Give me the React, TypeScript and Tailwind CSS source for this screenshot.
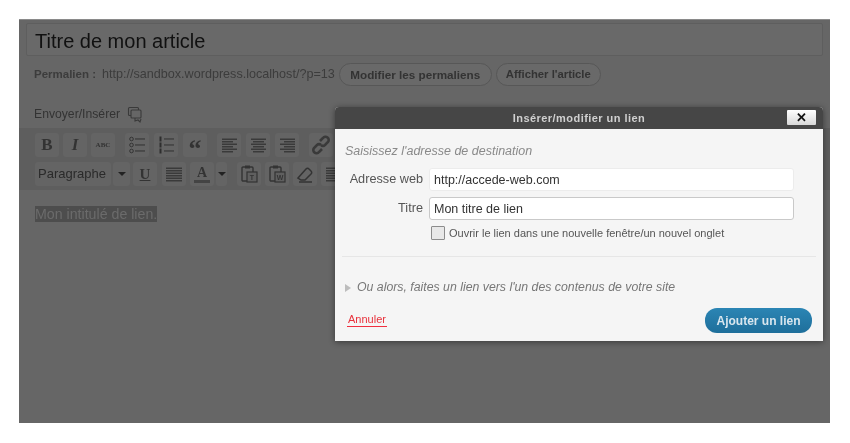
import type { ReactNode } from 'react'

const font = "font-['Liberation_Sans',Arial,sans-serif]"

function ToolButton({ children }: { children: ReactNode }) {
  return (
    <div className="flex h-[24px] w-[24px] items-center justify-center rounded-[3px] bg-[#646464]">
      {children}
    </div>
  )
}

function Lines({ kind }: { kind: 'left' | 'center' | 'right' | 'full' }) {
  const rows = [2.5, 5, 7.5, 10, 12.5, 15]
  const get = (i: number) => {
    const long = i % 2 === 0
    if (kind === 'full') return { x: 2, w: 16 }
    if (kind === 'left') return { x: 3, w: long ? 15 : 11 }
    if (kind === 'center') return { x: long ? 3 : 5, w: long ? 15 : 11 }
    return { x: long ? 3 : 7, w: long ? 15 : 11 }
  }
  return (
    <svg width="20" height="18" viewBox="0 0 20 18">
      {rows.map((y, i) => (
        <rect key={y} x={get(i).x} y={y} width={get(i).w} height="1.5" fill="#3a3a3a" />
      ))}
    </svg>
  )
}

function ListIcon({ numbered }: { numbered?: boolean }) {
  return (
    <svg width="20" height="18" viewBox="0 0 20 18">
      {[3, 9, 15].map(y => (
        <g key={y}>
          {numbered ? (
            <rect x="3.5" y={y - 2.5} width="2" height="5" fill="#2e2e2e" />
          ) : (
            <circle cx="4.5" cy={y} r="1.8" fill="none" stroke="#333" strokeWidth="1" />
          )}
          <rect x="8" y={y - 0.7} width="10" height="1.3" fill="#3c3c3c" />
        </g>
      ))}
    </svg>
  )
}

function PasteIcon({ label }: { label: string }) {
  return (
    <svg width="20" height="20" viewBox="0 0 20 20">
      <rect x="3" y="3" width="11" height="14" rx="1" fill="none" stroke="#333" strokeWidth="1.4" />
      <rect x="6" y="1.5" width="5" height="3" fill="#333" />
      <rect x="8" y="8" width="10" height="10" fill="#5f5f5f" stroke="#333" strokeWidth="1.2" />
      <text x="13" y="16" fontSize="7" fontWeight="700" textAnchor="middle" fill="#333" fontFamily="Liberation Sans">{label}</text>
    </svg>
  )
}

function Caret() {
  return <span className="h-0 w-0 border-x-[4px] border-t-[4px] border-x-transparent border-t-[#222]" />
}

function Toolbar() {
  return (
    <div className="flex h-[62px] flex-col gap-[5px] overflow-hidden bg-[#5e5e5e] pl-[16px] pt-[5px]">
      <div className="flex items-center">
        <div className="flex gap-[4px]">
          <ToolButton><span className="font-['Liberation_Serif',serif] text-[17px] font-bold text-[#333]">B</span></ToolButton>
          <ToolButton><span className="font-['Liberation_Serif',serif] text-[17px] font-bold italic text-[#333]">I</span></ToolButton>
          <ToolButton><span className="font-['Liberation_Serif',serif] text-[7px] font-bold text-[#333]">ABC</span></ToolButton>
        </div>
        <div className="ml-[10px] flex gap-[5px]">
          <ToolButton><ListIcon /></ToolButton>
          <ToolButton><ListIcon numbered /></ToolButton>
          <ToolButton><span className="mt-[7px] font-['Liberation_Serif',serif] text-[26px] font-bold leading-none text-[#333]">“</span></ToolButton>
        </div>
        <div className="ml-[10px] flex gap-[5px]">
          <ToolButton><Lines kind="left" /></ToolButton>
          <ToolButton><Lines kind="center" /></ToolButton>
          <ToolButton><Lines kind="right" /></ToolButton>
        </div>
        <div className="ml-[10px]">
          <ToolButton>
            <svg width="20" height="20" viewBox="0 0 20 20" fill="none" stroke="#3a3a3a" strokeWidth="2.6">
              <path d="M9 6l3-3a3 3 0 0 1 5 4l-3 3a3 3 0 0 1-4 0" />
              <path d="M11 14l-3 3a3 3 0 0 1-5-4l3-3a3 3 0 0 1 4 0" />
            </svg>
          </ToolButton>
        </div>
      </div>
      <div className="flex items-center">
        <div className="flex h-[24px] w-[76px] items-center rounded-[3px] bg-[#646464] pl-[3px] text-[13px] text-[#2a2a2a]">Paragraphe</div>
        <div className="ml-[2px] flex h-[24px] w-[17px] items-center justify-center rounded-[3px] bg-[#646464]"><Caret /></div>
        <div className="ml-[3px] flex gap-[5px]">
          <ToolButton><span className="font-['Liberation_Serif',serif] text-[15px] font-bold text-[#333] underline">U</span></ToolButton>
          <ToolButton><Lines kind="full" /></ToolButton>
        </div>
        <div className="ml-[4px] flex h-[24px] w-[24px] flex-col items-center justify-center rounded-[3px] bg-[#646464]">
          <span className="font-['Liberation_Serif',serif] text-[14px] font-bold leading-[14px] text-[#333]">A</span>
          <span className="h-[3px] w-[16px] bg-[#444]" />
        </div>
        <div className="ml-[2px] flex h-[24px] w-[11px] items-center justify-center rounded-[3px] bg-[#646464]"><Caret /></div>
        <div className="ml-[10px] flex gap-[4px]">
          <ToolButton><PasteIcon label="T" /></ToolButton>
          <ToolButton><PasteIcon label="W" /></ToolButton>
          <ToolButton>
            <svg width="20" height="20" viewBox="0 0 20 20" fill="none" stroke="#333" strokeWidth="1.5">
              <path d="M3 14l8-9a2 2 0 0 1 3 0l2 2a2 2 0 0 1 0 3l-6 6H6z" />
              <path d="M4 18h13" />
            </svg>
          </ToolButton>
          <ToolButton><Lines kind="left" /></ToolButton>
        </div>
      </div>
    </div>
  )
}

function LinkDialog() {
  return (
    <div className="absolute left-[335px] top-[107px] h-[234px] w-[488px] overflow-hidden rounded-t-[4px] bg-[#f5f5f5] shadow-[0_1px_6px_rgba(0,0,0,0.45)]">
      <div className="relative flex h-[22px] items-center justify-center bg-[#464646] text-[11px] font-bold tracking-[0.45px] text-[#d0d0d0]">
        Insérer/modifier un lien
        <div className="absolute left-[452px] top-[3px] flex h-[15px] w-[29px] items-center justify-center rounded-[1px] bg-gradient-to-b from-[#ffffff] to-[#d8d8d8] text-[13px] font-bold leading-none text-[#111]">✕</div>
      </div>
      <div className="pl-[10px] pr-[29px] pt-[15px]">
        <p className="text-[12.5px] italic leading-[15px] text-[#8a8a8a]">Saisissez l'adresse de destination</p>
        <div className="mt-[9px] flex items-center">
          <label className="w-[78px] pt-px text-right text-[12.7px] text-[#555]">Adresse web</label>
          <input readOnly value="http://accede-web.com" className="ml-[6px] h-[23px] flex-1 rounded-[3px] border border-[#ececec] bg-white px-[4px] text-[12.5px] text-[#333] outline-none" />
        </div>
        <div className="mt-[6px] flex items-center">
          <label className="w-[78px] pt-px text-right text-[12.7px] text-[#555]">Titre</label>
          <input readOnly value="Mon titre de lien" className="ml-[6px] h-[23px] flex-1 rounded-[3px] border border-[#c9c9c9] bg-white px-[4px] text-[12.5px] text-[#333] outline-none" />
        </div>
        <div className="ml-[86px] mt-[6px] flex items-center">
          <span className="h-[14px] w-[14px] rounded-[1px] border border-[#8c8c8c] bg-[#e8e8e8]" />
          <span className="ml-[4px] text-[11px] leading-[14px] text-[#555]">Ouvrir le lien dans une nouvelle fenêtre/un nouvel onglet</span>
        </div>
      </div>
      <div className="mx-[7px] mt-[16px] h-px bg-[#e6e6e6]" />
      <div className="mt-[23px] flex items-center pl-[10px]">
        <span className="h-0 w-0 border-y-[4px] border-l-[6px] border-y-transparent border-l-[#bdbdbd]" />
        <span className="ml-[6px] text-[12.3px] italic leading-[15px] text-[#777]">Ou alors, faites un lien vers l'un des contenus de votre site</span>
      </div>
      <div className="mt-[13px] flex items-start justify-between pl-[12px] pr-[11px]">
        <a className="mt-[5px] border-b border-[#f03040] px-[1px] text-[11px] leading-[13px] text-[#e8323c]">Annuler</a>
        <button className="flex h-[25px] w-[107px] items-center justify-center rounded-[12px] bg-gradient-to-b from-[#2b85b4] to-[#1f6f9b] text-[12px] font-bold text-[#d9e6ee]">Ajouter un lien</button>
      </div>
    </div>
  )
}

export default function App() {
  return (
    <div className={`relative h-[443px] w-[850px] overflow-hidden bg-white pl-[19px] pt-[19px] blur-[0.5px] ${font}`}>
      <div className="h-[404px] w-[811px] border-t border-[#8a8a8a] bg-[#666666]">
        <div className="mx-[7px] mt-[3px] flex h-[33px] items-center rounded-[2px] border border-[#5e5e5e] bg-[#696969] pl-[8px] pt-[2px] text-[20px] text-[#111]">
          Titre de mon article
        </div>
        <div className="mt-[7px] flex items-center pl-[15px]">
          <span className="text-[11.5px] font-bold text-[#3c3c3c]">Permalien :</span>
          <span className="ml-[6px] text-[12.6px] text-[#3c3c3c]">http://sandbox.wordpress.localhost/?p=13</span>
          <span className="ml-[4px] flex h-[23px] w-[153px] items-center justify-center rounded-[12px] border border-[#575757] bg-[#696969] text-[11.7px] font-bold text-[#333]">Modifier les permaliens</span>
          <span className="ml-[4px] flex h-[23px] w-[105px] items-center justify-center rounded-[12px] border border-[#575757] bg-[#696969] text-[11.3px] font-bold text-[#333]">Afficher l'article</span>
        </div>
        <div className="mt-[18px] flex h-[20px] items-center pl-[15px] text-[12.2px] text-[#333]">
          Envoyer/Insérer
          <svg className="ml-[7px]" width="17" height="17" viewBox="0 0 17 17" fill="none" stroke="#3a3a3a" strokeWidth="1.1">
            <rect x="1.5" y="1.5" width="10" height="8" rx="1" />
            <rect x="4" y="4" width="10" height="8" rx="1" fill="#666" />
            <path d="M8 12v3l3-1 2 2 1-3" />
          </svg>
        </div>
        <div className="mt-[4px]">
          <Toolbar />
        </div>
        <div className="mt-[16px] pl-[16px] text-[14.2px] leading-[17px]">
          <span className="bg-[#4d4d4d] text-[#6b6b6b]">Mon intitulé de lien.</span>
        </div>
      </div>
      <LinkDialog />
    </div>
  )
}
